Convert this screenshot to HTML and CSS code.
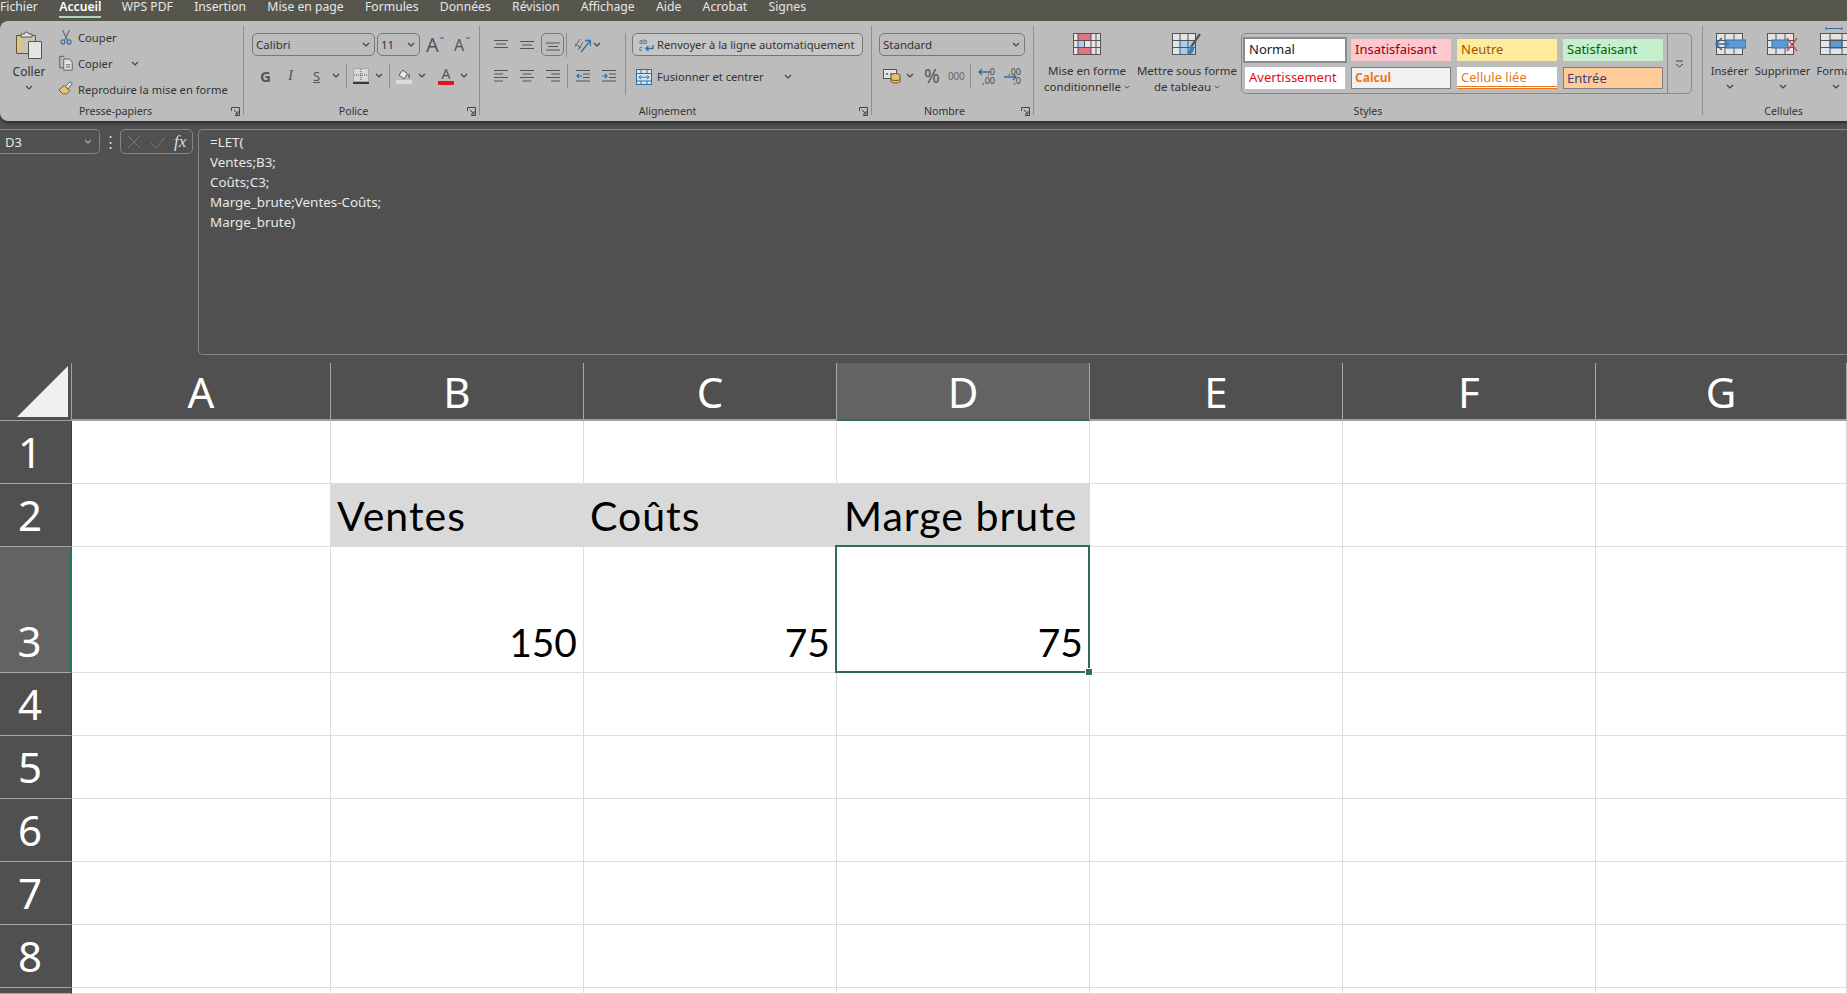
FILE: index.html
```html
<!DOCTYPE html>
<html lang="fr">
<head>
  <meta charset="UTF-8">
  <title>Classeur - Excel</title>
  <link rel="stylesheet" href="styles.css">
</head>
<body>
  <svg class="defs" width="0" height="0">
    <symbol id="chev" viewBox="0 0 8 5"><path d="M1 1l3 3 3-3" fill="none" stroke="#444" stroke-width="1.2"/></symbol>
    <symbol id="launch" viewBox="0 0 9 9"><path d="M.5 4V.5h8v8H4M3 3l4 4M7 4v3H4" fill="none" stroke="#444" stroke-width="1"/></symbol>
  </svg>

  <nav class="tabs">
    <span class="tab">Fichier</span>
    <span class="tab tab-active">Accueil</span>
    <span class="tab">WPS PDF</span>
    <span class="tab">Insertion</span>
    <span class="tab">Mise en page</span>
    <span class="tab">Formules</span>
    <span class="tab">Données</span>
    <span class="tab">Révision</span>
    <span class="tab">Affichage</span>
    <span class="tab">Aide</span>
    <span class="tab">Acrobat</span>
    <span class="tab">Signes</span>
  </nav>

  <div class="ribbon">
    <!-- Presse-papiers -->
    <section class="group group-clip">
      <div class="group-body clip-body">
        <div class="big-btn paste-btn">
          <svg width="28" height="29" viewBox="0 0 28 29">
            <path d="M1.5 5.5h19v18h-19z" fill="#c9c4ae" stroke="#555"/>
            <path d="M2.5 6.5h3v16h-3z" fill="#eec55f"/>
            <path d="M6 7V4h3.500a2 2 0 0 1 4 0H17v3z" fill="#e4e4e4" stroke="#555"/>
            <path d="M13.500 11.500h13v17h-13z" fill="#e4e4e4" stroke="#555"/>
          </svg>
          <span class="big-label">Coller</span>
          <svg class="chev"><use href="#chev"/></svg>
        </div>
        <div class="clip-list">
          <div class="clip-row">
            <svg class="ic" viewBox="0 0 16 18">
              <path d="M4 1l5.500 11M12 1L6.500 12" fill="none" stroke="#666" stroke-width="1.200"/>
              <circle cx="4.500" cy="14.500" r="2.200" fill="none" stroke="#2f6ea8" stroke-width="1.300"/>
              <circle cx="11.500" cy="14.500" r="2.200" fill="none" stroke="#2f6ea8" stroke-width="1.300"/>
            </svg>
            <span>Couper</span>
          </div>
          <div class="clip-row">
            <svg class="ic" viewBox="0 0 16 18">
              <path d="M5 14.500H1V1.500h5" fill="none" stroke="#555"/>
              <path d="M5.500 4.500h6l3.500 3.500v9h-9.500z" fill="#e4e4e4" stroke="#555"/>
              <path d="M8 11h5M8 13.500h5" stroke="#555"/>
            </svg>
            <span>Copier</span>
            <svg class="chev chev-copy"><use href="#chev"/></svg>
          </div>
          <div class="clip-row">
            <svg class="ic" viewBox="0 0 16 18">
              <path d="M0 10l6-5 6 6-4 4-2-1-1 1z" fill="#e9c46a" stroke="#555"/>
              <path d="M7.500 6l5-5 2.500 2-4.500 6z" fill="#e4e4e4" stroke="#555"/>
            </svg>
            <span>Reproduire la mise en forme</span>
          </div>
        </div>
      </div>
      <div class="group-label"><span></span><span>Presse-papiers</span><svg class="launch"><use href="#launch"/></svg></div>
    </section>

    <!-- Police -->
    <section class="group group-font">
      <div class="group-body stack">
        <div class="row">
          <div class="select sel-font"><span>Calibri</span><svg class="chev"><use href="#chev"/></svg></div>
          <div class="select sel-size"><span>11</span><svg class="chev"><use href="#chev"/></svg></div>
          <span class="grow-a">A<i class="caret caret-up">ˆ</i></span>
          <span class="shrink-a">A<i class="caret">ˇ</i></span>
        </div>
        <div class="row row-tools font-tools">
          <b class="tool-g">G</b>
          <i class="tool-i">I</i>
          <u class="tool-s">S</u>
          <svg class="chev"><use href="#chev"/></svg>
          <span class="vsep"></span>
          <svg class="ic" viewBox="0 0 16 16">
            <rect x=".500" y=".500" width="15" height="13" fill="#d8d8d8" stroke="#888" stroke-dasharray="1 1"/>
            <path d="M8 1v12M1 7h14" stroke="#555" stroke-dasharray="1 1"/>
            <path d="M0 15h16" stroke="#111" stroke-width="1.500"/>
          </svg>
          <svg class="chev"><use href="#chev"/></svg>
          <span class="vsep"></span>
          <svg class="ic" viewBox="0 0 16 16">
            <path d="M3 7l4-5 4.500 4-3.500 5z" fill="#e8e8e8" stroke="#555"/>
            <path d="M12.500 6c1 2 1.500 3 .5 4" fill="none" stroke="#2f6ea8" stroke-width="1.300"/>
            <rect y="12" width="16" height="4" fill="#dcdcdc"/>
          </svg>
          <svg class="chev"><use href="#chev"/></svg>
          <span class="color-a">A</span>
          <svg class="chev"><use href="#chev"/></svg>
        </div>
      </div>
      <div class="group-label"><span></span><span>Police</span><svg class="launch"><use href="#launch"/></svg></div>
    </section>

    <!-- Alignement -->
    <section class="group group-align">
      <div class="group-body align-body">
        <div class="stack align-icons">
          <div class="row row-align">
            <svg class="ic-line" viewBox="0 0 14 14"><path d="M0 2.500h14M2 6h10M0 9.500h14" stroke="#555"/></svg>
            <svg class="ic-line" viewBox="0 0 14 14"><path d="M0 3.500h14M2 7h10M0 10.500h14" stroke="#555"/></svg>
            <span class="pressed"><svg class="ic-line" viewBox="0 0 14 14"><path d="M0 5h14M2 8.500h10M0 12h14" stroke="#555"/></svg></span>
            <span class="vsep"></span>
            <svg class="ic-orient" viewBox="0 0 18 16">
              <path d="M2 10l5-8M5 13l5-8M2 7l6 4" fill="none" stroke="#666"/>
              <path d="M8 15L17 4M12 3.500h5.500V9" fill="none" stroke="#2f6ea8" stroke-width="1.300"/>
            </svg>
            <svg class="chev"><use href="#chev"/></svg>
          </div>
          <div class="row row-align row-second">
            <svg class="ic-line" viewBox="0 0 14 14"><path d="M0 1.500h14M0 5h9M0 8.500h14M0 12h9" stroke="#555"/></svg>
            <svg class="ic-line" viewBox="0 0 14 14"><path d="M0 1.500h14M2.500 5h9M0 8.500h14M2.500 12h9" stroke="#555"/></svg>
            <svg class="ic-line" viewBox="0 0 14 14"><path d="M0 1.500h14M5 5h9M0 8.500h14M5 12h9" stroke="#555"/></svg>
            <span class="vsep"></span>
            <svg class="ic-line" viewBox="0 0 14 14"><path d="M0 1.500h14M7 5h7M7 8.500h7M0 12h14" stroke="#555"/><path d="M6 7H1M3 5L1 7l2 2" fill="none" stroke="#2f6ea8" stroke-width="1.200"/></svg>
            <svg class="ic-line" viewBox="0 0 14 14"><path d="M0 1.500h14M7 5h7M7 8.500h7M0 12h14" stroke="#555"/><path d="M0 7h5M3 5l2 2-2 2" fill="none" stroke="#2f6ea8" stroke-width="1.200"/></svg>
          </div>
        </div>
        <span class="vsep vsep-tall"></span>
        <div class="stack wrap-col">
          <div class="wrap-btn">
            <svg class="ic" viewBox="0 0 16 16">
              <text x="1" y="6.500" class="ic-text">ab</text><text x="1" y="14" class="ic-text">c</text>
              <path d="M15 8v3.500H8M10.500 9L8 11.500l2.500 2.500" fill="none" stroke="#2f6ea8" stroke-width="1.300"/>
            </svg>
            <span>Renvoyer à la ligne automatiquement</span>
          </div>
          <div class="merge-row">
            <svg class="ic" viewBox="0 0 16 16">
              <rect x=".500" y=".500" width="15" height="15" fill="#d8e4ee" stroke="#2f6ea8"/>
              <path d="M.500 4.500h15M.500 12h15M5 .500v4M11 .500v4M5 12v3.500M11 12v3.500" stroke="#2f6ea8"/>
              <path d="M3 8.200h10M5 6.200l-2 2 2 2M11 6.200l2 2-2 2" fill="none" stroke="#2f6ea8"/>
            </svg>
            <span>Fusionner et centrer</span>
            <svg class="chev"><use href="#chev"/></svg>
          </div>
        </div>
      </div>
      <div class="group-label"><span></span><span>Alignement</span><svg class="launch"><use href="#launch"/></svg></div>
    </section>

    <!-- Nombre -->
    <section class="group group-num">
      <div class="group-body stack">
        <div class="select sel-num"><span>Standard</span><svg class="chev"><use href="#chev"/></svg></div>
        <div class="row row-tools num-tools">
          <svg class="ic-acct" viewBox="0 0 18 16">
            <rect x=".500" y="1.500" width="13" height="9" fill="#e4e4e4" stroke="#555"/>
            <path d="M3 6h2M7 6h2" stroke="#555" stroke-width="1.500"/>
            <ellipse cx="12.500" cy="7.500" rx="4.500" ry="2" fill="#e8c06a" stroke="#6b5320"/>
            <path d="M8 7.500v6c0 2 9 2 9 0v-6M8 11c0 2 9 2 9 0" fill="#e8c06a" stroke="#6b5320"/>
          </svg>
          <svg class="chev"><use href="#chev"/></svg>
          <span class="percent">%</span>
          <span class="thousand">000</span>
          <span class="vsep"></span>
          <span class="dec">
            <svg class="dec-ic" viewBox="0 0 15 15"><path d="M14 5H2M5 2L2 5l3 3" fill="none" stroke="#2f6ea8" stroke-width="1.300"/></svg>
            <i class="dec-text">,0<br>,00</i>
          </span>
          <span class="dec">
            <i class="dec-text">,00<br>,0</i>
            <svg class="dec-ic dec-ic2" viewBox="0 0 15 15"><path d="M1 8h12M10 5l3 3-3 3" fill="none" stroke="#2f6ea8" stroke-width="1.300"/></svg>
          </span>
        </div>
      </div>
      <div class="group-label"><span></span><span>Nombre</span><svg class="launch"><use href="#launch"/></svg></div>
    </section>

    <!-- Styles -->
    <section class="group group-styles">
      <div class="group-body styles-body">
        <div class="big-btn fmt-btn">
          <svg width="28" height="22" viewBox="0 0 28 22">
            <rect x=".500" y=".500" width="27" height="21" fill="#e4e4e4" stroke="#555"/>
            <rect x="5" y="1" width="13" height="6" fill="#e2737c"/>
            <rect x="5" y="15" width="13" height="6" fill="#e2737c"/>
            <rect x="5" y="8" width="6.500" height="6" fill="#a9cdf0"/>
            <path d="M.500 7.500h27M.500 14.500h27M5 .500v21M11.500 7.500v7M18 .500v21M23 .500v21" stroke="#555"/>
          </svg>
          <span class="fmt-label">Mise en forme<br>conditionnelle<svg class="chev chev-in"><use href="#chev"/></svg></span>
        </div>
        <div class="big-btn tbl-btn">
          <svg width="30" height="24" viewBox="0 0 30 24">
            <rect x=".500" y=".500" width="23" height="21" fill="#e4e4e4" stroke="#555"/>
            <rect x="8" y="8" width="15" height="13" fill="#a9cdf0"/>
            <path d="M.500 7.500h23M.500 14.500h23M8 .500v21M16 .500v21" stroke="#555"/>
            <path d="M28 1L19 14" stroke="#555" stroke-width="2.200"/>
            <path d="M19 13c-2 2-1 5-5 9 4 0 8-2 8-7z" fill="#3d7fb8"/>
          </svg>
          <span class="fmt-label">Mettre sous forme<br>de tableau<svg class="chev chev-in"><use href="#chev"/></svg></span>
        </div>
        <div class="gallery">
          <div class="gallery-grid">
            <span class="st st-normal">Normal</span>
            <span class="st st-bad">Insatisfaisant</span>
            <span class="st st-neutral">Neutre</span>
            <span class="st st-good">Satisfaisant</span>
            <span class="st st-warn">Avertissement</span>
            <span class="st st-calc">Calcul</span>
            <span class="st st-linked">Cellule liée</span>
            <span class="st st-input">Entrée</span>
          </div>
          <div class="gallery-more">
            <svg width="9" height="8" viewBox="0 0 9 8"><path d="M1 1h7M1 4l3.500 3L8 4" fill="none" stroke="#444"/></svg>
          </div>
        </div>
      </div>
      <div class="group-label label-plain">Styles</div>
    </section>

    <!-- Cellules -->
    <section class="group group-cells">
      <div class="group-body cells-body">
        <div class="cell-btn">
          <svg width="32" height="22" viewBox="0 0 32 22">
            <rect x="2.500" y=".500" width="26" height="21" fill="#e4e4e4" stroke="#555"/>
            <path d="M2.500 7.500h26M2.500 14.500h26M11 .500v21M20 .500v21" stroke="#555"/>
            <rect x="12" y="7" width="20" height="8" fill="#5b9bd5" stroke="#2f6ea8"/>
            <path d="M15 11H2M8 5l-6 6 6 6" fill="none" stroke="#2f6ea8" stroke-width="1.600"/>
          </svg>
          <span>Insérer</span>
          <svg class="chev"><use href="#chev"/></svg>
        </div>
        <div class="cell-btn">
          <svg width="32" height="22" viewBox="0 0 32 22">
            <rect x=".500" y=".500" width="26" height="21" fill="#e4e4e4" stroke="#555"/>
            <path d="M.500 7.500h26M.500 14.500h26M9 .500v21M18 .500v21" stroke="#555"/>
            <rect x="5" y="7" width="16" height="8" fill="#5b9bd5" stroke="#2f6ea8"/>
            <path d="M20 5l10 13M30 5L20 18" stroke="#c8474c" stroke-width="1.300"/>
          </svg>
          <span>Supprimer</span>
          <svg class="chev"><use href="#chev"/></svg>
        </div>
        <div class="cell-btn cell-btn-cut">
          <svg class="format-ic" width="32" height="28" viewBox="0 0 32 28">
            <path d="M6 1.500h16M6 0v3M22 0v3" stroke="#2f6ea8"/>
            <rect x=".500" y="6.500" width="31" height="21" fill="#e4e4e4" stroke="#555"/>
            <rect x="10" y="13" width="12" height="8" fill="#5b9bd5" stroke="#2f6ea8"/>
            <path d="M.500 13.500h31M.500 20.500h31M10 6.500v21M22 6.500v21" stroke="#555"/>
          </svg>
          <span>Format</span>
          <svg class="chev"><use href="#chev"/></svg>
        </div>
      </div>
      <div class="group-label label-plain label-cells">Cellules</div>
    </section>
  </div>

  <div class="formula-bar">
    <div class="name-box"><span>D3</span><svg class="chev chev-light"><use href="#chev"/></svg></div>
    <span class="dots">⋮</span>
    <div class="fx-box">
      <svg width="16" height="16" viewBox="0 0 16 16"><path d="M2 2l12 12M14 2L2 14" stroke="#777" stroke-width="1"/></svg>
      <svg width="16" height="16" viewBox="0 0 16 16"><path d="M1 9l5 5L15 3" fill="none" stroke="#777" stroke-width="1"/></svg>
      <span class="fx">fx</span>
    </div>
    <div class="formula-input">=LET(<br>Ventes;B3;<br>Coûts;C3;<br>Marge_brute;Ventes-Coûts;<br>Marge_brute)</div>
  </div>

  <div class="sheet">
    <div class="corner"><span class="corner-tri"></span></div>
    <div class="col-head">A</div><div class="col-head">B</div><div class="col-head">C</div><div class="col-head col-active">D</div><div class="col-head">E</div><div class="col-head">F</div><div class="col-head">G</div>

    <div class="row-head">1</div>
    <div class="cell"></div><div class="cell"></div><div class="cell"></div><div class="cell"></div><div class="cell"></div><div class="cell"></div><div class="cell"></div>

    <div class="row-head">2</div>
    <div class="cell"></div>
    <div class="cell cell-title">Ventes</div><div class="cell cell-title">Coûts</div><div class="cell cell-title cell-title-d">Marge brute</div>
    <div class="cell"></div><div class="cell"></div><div class="cell"></div>

    <div class="row-head row-active">3</div>
    <div class="cell"></div>
    <div class="cell cell-num">150</div><div class="cell cell-num">75</div><div class="cell cell-num cell-selected">75</div>
    <div class="cell"></div><div class="cell"></div><div class="cell"></div>

    <div class="row-head">4</div>
    <div class="cell"></div><div class="cell"></div><div class="cell"></div><div class="cell"></div><div class="cell"></div><div class="cell"></div><div class="cell"></div>

    <div class="row-head">5</div>
    <div class="cell"></div><div class="cell"></div><div class="cell"></div><div class="cell"></div><div class="cell"></div><div class="cell"></div><div class="cell"></div>

    <div class="row-head">6</div>
    <div class="cell"></div><div class="cell"></div><div class="cell"></div><div class="cell"></div><div class="cell"></div><div class="cell"></div><div class="cell"></div>

    <div class="row-head">7</div>
    <div class="cell"></div><div class="cell"></div><div class="cell"></div><div class="cell"></div><div class="cell"></div><div class="cell"></div><div class="cell"></div>

    <div class="row-head">8</div>
    <div class="cell"></div><div class="cell"></div><div class="cell"></div><div class="cell"></div><div class="cell"></div><div class="cell"></div><div class="cell"></div>

    <div class="row-head"></div>
    <div class="cell"></div><div class="cell"></div><div class="cell"></div><div class="cell"></div><div class="cell"></div><div class="cell"></div><div class="cell"></div>
  </div>
</body>
</html>
```

FILE: styles.css
```css
html, body {
  margin: 0;
  height: 994px;
  overflow: hidden;
}
body {
  font-family: "Noto Sans", sans-serif;
  font-size: 11.2px;
  color: #333;
  background: #505050;
}
.defs {
  display: block;
}

/* tabs */
.tabs {
  display: flex;
  gap: 21.3px;
  height: 21px;
  background: #56564f;
  color: #e6e6e6;
  font-size: 12.2px;
  line-height: 14px;
}
.tab {
  height: 16px;
}
.tab-active {
  margin-right: -1px;
  color: #fff;
  font-weight: 600;
  border-bottom: 2px solid #a9d8bd;
}

/* ribbon */
.ribbon {
  display: flex;
  height: 100px;
  padding: 5px 0 6px;
  box-sizing: border-box;
  background: #bcbcbc;
  border-radius: 8px 0 0 8px;
  box-shadow: 0 2px 3px rgba(0,0,0,0.45);
  position: relative;
}
.group {
  flex: none;
  height: 89px;
  box-sizing: border-box;
  border-right: 1px solid #8f8f8f;
}
.group-clip { width: 244px; }
.group-font { width: 236px; }
.group-align { width: 392px; }
.group-num { width: 162px; }
.group-styles { width: 669px; }
.group-cells { width: 145px; border-right: none; }
.group-body {
  height: 77px;
  box-sizing: border-box;
  padding-top: 7px;
}
.group-label {
  display: grid;
  grid-template-columns: 1fr auto 1fr;
  align-items: center;
  height: 16px;
  margin-bottom: -4px;
  padding-right: 16px;
  line-height: 16px;
  font-size: 10.6px;
  text-align: center;
}
.label-plain {
  display: block;
  padding-right: 0;
}
.label-cells {
  padding-left: 16px;
}
.launch {
  justify-self: end;
  width: 9px;
  height: 9px;
  margin-right: -13px;
}
.group-clip .group-label {
  padding-right: 12px;
}
.group-clip .launch {
  margin-right: -9px;
}
.chev {
  flex: none;
  width: 8px;
  height: 5px;
}
.stack {
  display: flex;
  flex-direction: column;
  gap: 8px;
}
.row {
  display: flex;
  align-items: center;
  height: 23px;
}
.vsep {
  flex: none;
  width: 1px;
  height: 24px;
  background: #8f8f8f;
}
.ic {
  flex: none;
  width: 16px;
  height: 16px;
}
.select {
  display: flex;
  align-items: center;
  justify-content: space-between;
  height: 23px;
  box-sizing: border-box;
  padding: 0 4px 0 3px;
  border: 1px solid #777;
  border-radius: 5px;
  font-size: 11.5px;
}

/* clipboard */
.clip-body {
  display: flex;
  padding-top: 4px;
}
.paste-btn {
  width: 58px;
  flex: none;
}
.big-btn {
  display: flex;
  flex-direction: column;
  align-items: center;
}
.big-label {
  margin-top: 5px;
  line-height: 16px;
  font-size: 12px;
}
.paste-btn .chev {
  margin-top: 5px;
}
.clip-list {
  display: flex;
  flex-direction: column;
  gap: 10px;
  margin-top: -1px;
}
.clip-row {
  display: flex;
  align-items: center;
  gap: 4px;
  height: 16px;
  white-space: nowrap;
}
.chev-copy {
  margin-left: 14px;
}

/* font */
.group-font .group-body {
  padding-left: 8px;
}
.sel-font {
  width: 123px;
  margin-right: 2px;
}
.sel-size {
  width: 43px;
  margin-right: 6px;
}
.grow-a, .shrink-a {
  position: relative;
  color: #555;
  line-height: 20px;
}
.grow-a { font-size: 20px; width: 28px; }
.shrink-a { font-size: 16px; }
.caret {
  position: absolute;
  left: 13px;
  top: -3px;
  font-style: normal;
  font-size: 13px;
  color: #2f6ea8;
}
.shrink-a .caret {
  left: 11px;
}
.caret-up {
  color: #2f6ea8;
}
.font-tools {
  padding-left: 8px;
}
.tool-g { color: #555; font-size: 15px; width: 28px; }
.tool-i { color: #555; font-family: "Liberation Serif", serif; font-size: 15px; width: 25px; }
.tool-s { color: #555; font-size: 13px; width: 13px; }
.font-tools .vsep { margin: 0 6px; }
.font-tools .chev { margin-left: 6px; }
.color-a {
  width: 16px;
  margin-left: 12px;
  color: #555;
  font-size: 14px;
  line-height: 15px;
  text-align: center;
  border-bottom: 4px solid #e3141c;
}

/* alignment */
.align-body {
  display: flex;
  padding-left: 14px;
}
.align-icons {
  width: 131px;
  flex: none;
}
.ic-line {
  flex: none;
  width: 14px;
  height: 14px;
}
.row-align {
  gap: 12px;
}
.pressed {
  display: flex;
  align-items: center;
  justify-content: center;
  width: 23px;
  height: 23px;
  box-sizing: border-box;
  margin-left: -5px;
  margin-right: -12px;
  border: 1px solid #777;
  border-radius: 5px;
}
.row-align .vsep {
  margin-left: 2px;
  margin-right: -6px;
}
.row-second .vsep {
  margin-left: -5px;
  margin-right: -4px;
}
.ic-orient {
  width: 18px;
  height: 16px;
  flex: none;
}
.row-align > .chev {
  margin-left: -10px;
}
.vsep-tall {
  height: 62px;
}
.wrap-col {
  margin-left: 6px;
}
.wrap-btn {
  display: flex;
  align-items: center;
  gap: 3px;
  width: 231px;
  height: 23px;
  box-sizing: border-box;
  padding-left: 5px;
  border: 1px solid #777;
  border-radius: 5px;
  background: #c6c6c6;
  white-space: nowrap;
}
.ic-text {
  font-size: 7px;
  fill: #555;
}
.merge-row {
  display: flex;
  align-items: center;
  gap: 5px;
  height: 23px;
  padding-left: 4px;
  margin-top: 1px;
}
.merge-row .chev {
  margin-left: 15px;
}

/* number */
.group-num .group-body {
  padding-left: 7px;
}
.sel-num {
  width: 146px;
}
.num-tools {
  padding-left: 4px;
}
.ic-acct {
  width: 18px;
  height: 16px;
  flex: none;
}
.num-tools > .chev {
  margin-left: 5px;
}
.percent {
  margin-left: 10px;
  width: 24px;
  font-size: 19px;
  color: #555;
}
.thousand {
  width: 22px;
  font-size: 10px;
  color: #666;
  letter-spacing: -0.2px;
}
.dec {
  position: relative;
  width: 18px;
  height: 18px;
  margin-left: 6px;
}
.dec + .dec {
  margin-left: 8px;
}
.dec-text {
  display: block;
  font-style: normal;
  font-size: 9px;
  line-height: 9px;
  color: #444;
  text-align: right;
}
.dec-ic {
  position: absolute;
  left: 0;
  top: 0;
  width: 15px;
  height: 15px;
}
.dec-ic2 {
  top: 2px;
}
.num-tools .vsep {
  margin-left: 0;
}

/* styles */
.styles-body {
  display: flex;
  align-items: flex-start;
}
.fmt-btn {
  width: 100px;
  margin-left: 3px;
  flex: none;
}
.tbl-btn {
  width: 104px;
  margin-left: -2px;
  flex: none;
}
.fmt-label {
  margin-top: 8px;
  font-size: 11.5px;
  line-height: 16px;
  text-align: center;
  white-space: nowrap;
}
.tbl-btn .fmt-label {
  margin-top: 6px;
}
.chev-in {
  margin-left: 3px;
  vertical-align: 2px;
  width: 6px;
  height: 4px;
}
.gallery {
  display: flex;
  height: 61px;
  box-sizing: border-box;
  margin-left: 2px;
  border: 1px solid #888;
  border-radius: 5px;
}
.gallery-grid {
  display: grid;
  grid-template-columns: repeat(4, 100px);
  grid-template-rows: 22px 22px;
  gap: 6px;
  padding: 5px 3px 0 3px;
  width: 425px;
  box-sizing: border-box;
}
.gallery-more {
  display: flex;
  align-items: center;
  justify-content: center;
  width: 23px;
  border-left: 1px solid #888;
}
.st {
  padding-left: 4px;
  font-size: 13px;
  line-height: 21px;
  white-space: nowrap;
  overflow: hidden;
  box-sizing: border-box;
}
.st-normal { background: #fff; color: #222; outline: 2px solid #8b8b8b; outline-offset: 0; }
.st-bad { background: #ffc7ce; color: #9c0006; }
.st-neutral { background: #ffeb9c; color: #9c5700; }
.st-good { background: #c6efce; color: #006100; }
.st-warn { background: #fff; color: #e01010; }
.st-calc { background: #f2f2f2; color: #e8781e; font-weight: 700; border: 1px solid #7f7f7f; padding-left: 3px; font-size: 12px; line-height: 20px; }
.st-linked { background: #fff; color: #e8781e; border-bottom: 3px double #e8781e; }
.st-input { background: #ffcc99; color: #3f3f76; border: 1px solid #7f7f7f; padding-left: 3px; line-height: 20px; }

/* cells */
.cells-body {
  display: flex;
}
.cell-btn {
  display: flex;
  flex-direction: column;
  align-items: center;
  flex: none;
  width: 53px;
  white-space: nowrap;
}
.cell-btn span {
  margin-top: 8px;
  line-height: 16px;
}
.cell-btn .chev {
  margin-top: 5px;
}
.cell-btn-cut {
  margin-top: -6px;
}
.format-ic {
  flex: none;
}

/* formula bar */
.formula-bar {
  display: flex;
  align-items: flex-start;
  height: 242px;
  box-sizing: border-box;
  padding-top: 8px;
  background: #505050;
  color: #e8e8e8;
}
.name-box {
  display: flex;
  align-items: center;
  justify-content: space-between;
  width: 100px;
  height: 25px;
  box-sizing: border-box;
  padding: 0 7px 0 5px;
  border: 1px solid #858585;
  border-left: none;
  border-radius: 0 5px 5px 0;
  font-size: 13px;
}
.chev-light {
  filter: invert(1) brightness(0.9);
}
.dots {
  width: 20px;
  line-height: 25px;
  font-size: 15px;
  text-align: center;
  color: #ddd;
}
.fx-box {
  display: flex;
  align-items: center;
  gap: 8px;
  width: 73px;
  height: 25px;
  box-sizing: border-box;
  padding-left: 5px;
  margin-right: 5px;
  border: 1px solid #858585;
  border-radius: 5px;
}
.fx {
  font-family: "Liberation Serif", serif;
  font-style: italic;
  font-size: 17px;
  color: #ddd;
  line-height: 20px;
}
.formula-input {
  flex: 1;
  height: 226px;
  box-sizing: border-box;
  padding: 2px 0 0 11px;
  border-top: 1px solid #858585;
  border-left: 1px solid #858585;
  border-bottom: 1px solid #858585;
  border-radius: 5px 0 0 5px;
  font-size: 13.4px;
  line-height: 20px;
}

/* grid */
.sheet {
  display: grid;
  grid-template-columns: 72px 259px repeat(5, 253px) 251px;
  grid-template-rows: 58px 63px 63px 126px 63px 63px 63px 63px 63px 6px;
  background: #fff;
}
.corner {
  display: flex;
  justify-content: flex-end;
  align-items: flex-end;
  padding: 0 3px 3px 0;
  background: #505050;
  border-right: 1px solid #a0a0a0;
  border-bottom: 1px solid #a0a0a0;
  box-sizing: border-box;
}
.corner-tri {
  width: 51px;
  height: 51px;
  background: #f0f0f0;
  clip-path: polygon(100% 0, 100% 100%, 0 100%);
}
.col-head {
  background: #505050;
  border-right: 1px solid #a8a8a8;
  border-bottom: 2px solid #a0a0a0;
  box-sizing: border-box;
  color: #fff;
  font-size: 42px;
  line-height: 57px;
  text-align: center;
}
.col-active {
  background: #636363;
  border-bottom-color: #2f6f50;
}
.row-head {
  display: flex;
  align-items: flex-end;
  justify-content: center;
  padding-right: 11px;
  background: #505050;
  border-bottom: 1px solid #a8a8a8;
  border-right: 1px solid #404040;
  box-sizing: border-box;
  color: #fff;
  font-size: 42px;
  line-height: 62px;
}
.row-active {
  background: #636363;
  border-right: 2px solid #1f7a4c;
}
.cell {
  border-right: 1px solid #dcdcdc;
  border-bottom: 1px solid #dcdcdc;
  box-sizing: border-box;
  font-family: Lato, sans-serif;
  font-size: 39px;
  color: #000;
  white-space: nowrap;
}
.cell-title {
  padding-left: 6px;
  font-size: 41px;
  letter-spacing: 1px;
  line-height: 64px;
  background: #d9d9d9;
  border-color: #d9d9d9;
}
.cell-title-d {
  padding-left: 7px;
}
.cell-num {
  display: flex;
  align-items: flex-end;
  justify-content: flex-end;
  padding: 0 6px 1px 0;
  line-height: 58px;
}
.cell-selected {
  position: relative;
}
.cell-selected::before {
  content: "";
  position: absolute;
  left: -2px;
  top: -2px;
  right: -1px;
  bottom: -1px;
  border: 2px solid #2f6f50;
}
.cell-selected::after {
  content: "";
  position: absolute;
  right: -4px;
  bottom: -4px;
  width: 6px;
  height: 6px;
  background: #2f6f50;
  border: 1px solid #fff;
}
```
